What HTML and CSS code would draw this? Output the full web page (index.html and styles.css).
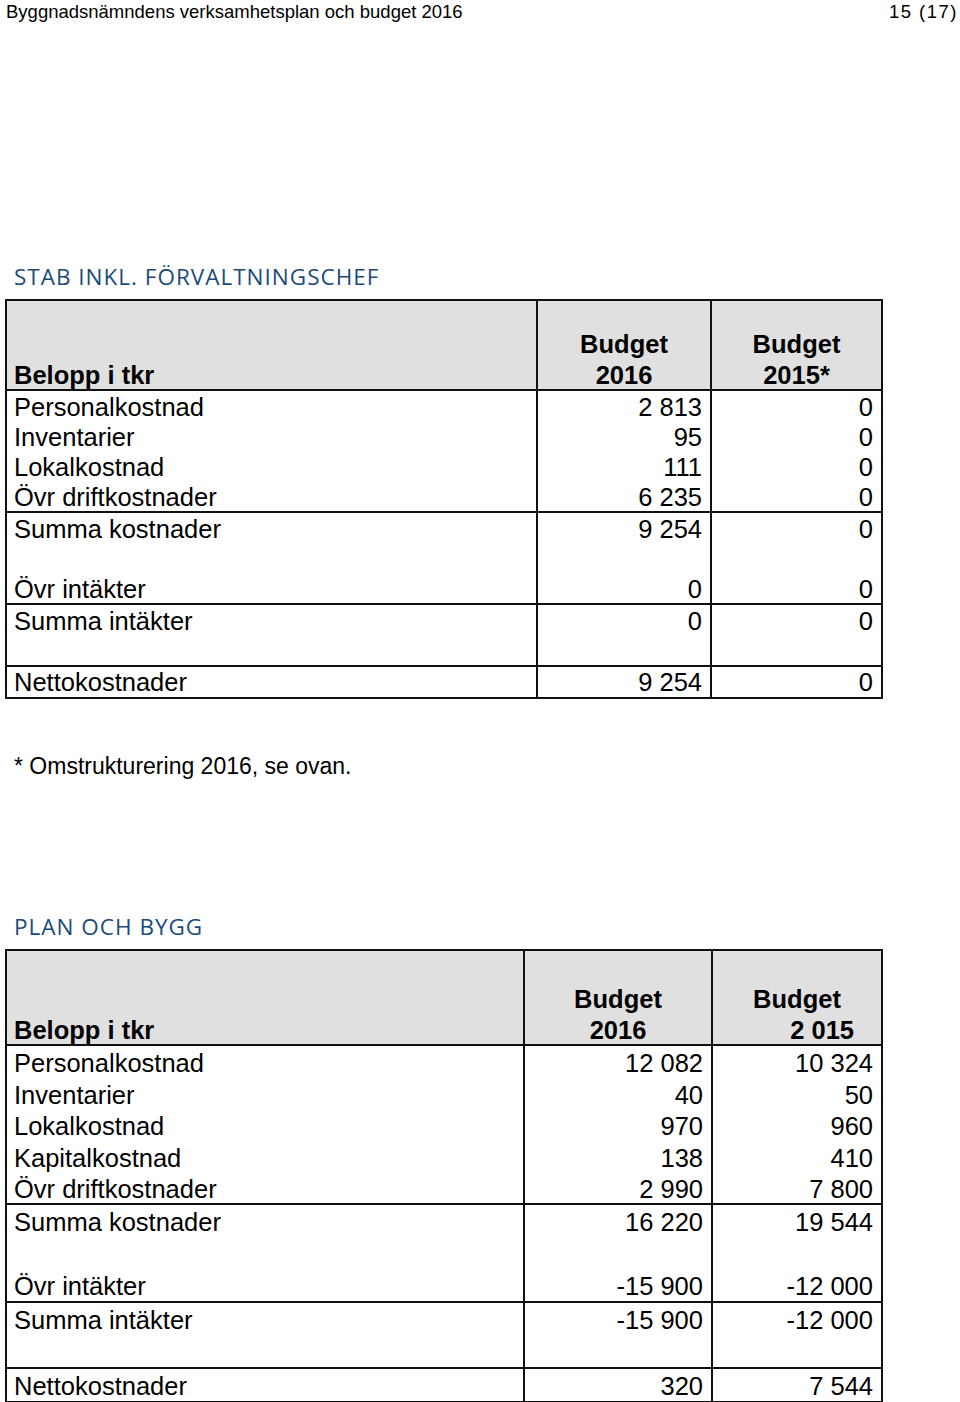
FILE: index.html
```html
<!DOCTYPE html>
<html lang="sv">
<head>
<meta charset="utf-8">
<title>Byggnadsnämndens verksamhetsplan och budget 2016</title>
<link rel="stylesheet" href="styles.css">
</head>
<body>
<header class="page-head">
  <span class="doc-title">Byggnadsnämndens verksamhetsplan och budget 2016</span>
  <span class="page-no">15 (17)</span>
</header>

<section class="sec sec-stab">
  <h2 class="sec-title">STAB INKL. FÖRVALTNINGSCHEF</h2>
  <table class="bt bt-stab">
    <colgroup><col class="c1"><col class="c2"><col class="c3"></colgroup>
    <thead>
      <tr><th class="lab">Belopp i tkr</th><th><span class="hl">Budget</span><span class="hl">2016</span></th><th><span class="hl">Budget</span><span class="hl">2015*</span></th></tr>
    </thead>
    <tbody>
      <tr><td class="lab">Personalkostnad</td><td>2 813</td><td>0</td></tr>
      <tr><td class="lab">Inventarier</td><td>95</td><td>0</td></tr>
      <tr><td class="lab">Lokalkostnad</td><td>111</td><td>0</td></tr>
      <tr><td class="lab">Övr driftkostnader</td><td>6 235</td><td>0</td></tr>
    </tbody>
    <tbody>
      <tr><td class="lab">Summa kostnader</td><td>9 254</td><td>0</td></tr>
      <tr><td class="lab"></td><td></td><td></td></tr>
      <tr><td class="lab">Övr intäkter</td><td>0</td><td>0</td></tr>
    </tbody>
    <tbody>
      <tr><td class="lab">Summa intäkter</td><td>0</td><td>0</td></tr>
      <tr><td class="lab"></td><td></td><td></td></tr>
    </tbody>
    <tbody>
      <tr><td class="lab">Nettokostnader</td><td>9 254</td><td>0</td></tr>
    </tbody>
  </table>
  <p class="note">* Omstrukturering 2016, se ovan.</p>
</section>

<section class="sec sec-plan">
  <h2 class="sec-title">PLAN OCH BYGG</h2>
  <table class="bt bt-plan">
    <colgroup><col class="c1"><col class="c2"><col class="c3"></colgroup>
    <thead>
      <tr><th class="lab">Belopp i tkr</th><th><span class="hl">Budget</span><span class="hl">2016</span></th><th><span class="hl">Budget</span><span class="hl hl-num">2 015</span></th></tr>
    </thead>
    <tbody class="g-first">
      <tr><td class="lab">Personalkostnad</td><td>12 082</td><td>10 324</td></tr>
      <tr><td class="lab">Inventarier</td><td>40</td><td>50</td></tr>
      <tr><td class="lab">Lokalkostnad</td><td>970</td><td>960</td></tr>
      <tr><td class="lab">Kapitalkostnad</td><td>138</td><td>410</td></tr>
      <tr><td class="lab">Övr driftkostnader</td><td>2 990</td><td>7 800</td></tr>
    </tbody>
    <tbody>
      <tr><td class="lab">Summa kostnader</td><td>16 220</td><td>19 544</td></tr>
      <tr><td class="lab"></td><td></td><td></td></tr>
      <tr><td class="lab">Övr intäkter</td><td>-15 900</td><td>-12 000</td></tr>
    </tbody>
    <tbody>
      <tr><td class="lab">Summa intäkter</td><td>-15 900</td><td>-12 000</td></tr>
      <tr><td class="lab"></td><td></td><td></td></tr>
    </tbody>
    <tbody>
      <tr><td class="lab">Nettokostnader</td><td>320</td><td>7 544</td></tr>
    </tbody>
  </table>
</section>
</body>
</html>
```

FILE: styles.css
```css
html, body {
  margin: 0;
  padding: 0;
  background: #ffffff;
}

body {
  width: 960px;
  color: #000;
  font-family: "Liberation Sans", Arial, sans-serif;
}

.page-head {
  display: flex;
  justify-content: space-between;
  align-items: baseline;
  height: 24px;
  padding: 2px 2px 0 6px;
  box-sizing: border-box;
  font-size: 18.5px;
  line-height: 20px;
}

.page-no {
  letter-spacing: 1.5px;
}

.sec-title {
  margin: 0 0 8px 14px;
  font-family: "Open Sans", "Noto Sans", sans-serif;
  font-weight: 400;
  font-size: 22.5px;
  line-height: 28px;
  letter-spacing: 1px;
  color: #1b4a7a;
}

.sec-stab {
  margin-top: 239px;
}

.sec-plan {
  margin-top: 134px;
}

.bt {
  margin-left: 5px;
  width: 878px;
  table-layout: fixed;
  border-collapse: collapse;
  border: 2px solid #111;
  font-size: 25.5px;
}

.bt-stab .c1 { width: 531px; }
.bt-stab .c2 { width: 174px; }
.bt-plan .c1 { width: 518px; }
.bt-plan .c2 { width: 188px; }

.bt th,
.bt td {
  padding: 0 8px;
  border-left: 2px solid #111;
  border-right: 2px solid #111;
  text-align: right;
  white-space: nowrap;
}

.bt th {
  background: #e0e0e0;
  font-weight: 700;
  vertical-align: bottom;
  text-align: center;
  line-height: 31px;
  border-bottom: 2px solid #111;
}

.bt th.lab,
.bt td.lab {
  text-align: left;
  padding-left: 7px;
}

.bt th.lab {
  line-height: 27px;
}

.hl {
  display: block;
}

.hl:first-child {
  line-height: 35px;
}

.hl:last-child {
  line-height: 27px;
}

.hl-num {
  text-align: right;
  padding-right: 19px;
}

.bt tbody {
  border-top: 2px solid #111;
}

.bt td {
  vertical-align: middle;
  line-height: 28px;
}

.bt-stab thead th { height: 88px; }
.bt-stab tbody tr { height: 30px; }
.bt-stab tbody tr:first-child { height: 32px; }

.bt-plan thead th { height: 93px; }
.bt-plan tbody tr { height: 32px; }
.bt-plan tbody tr:first-child { height: 34px; }
.bt-plan tbody.g-first tr { height: 31.4px; }
.bt-plan tbody.g-first tr:first-child { height: 33.4px; }

.bt-plan td {
  padding-top: 2px;
}

.note {
  margin: 54px 0 0 14px;
  font-size: 23px;
  line-height: 26px;
}
```
